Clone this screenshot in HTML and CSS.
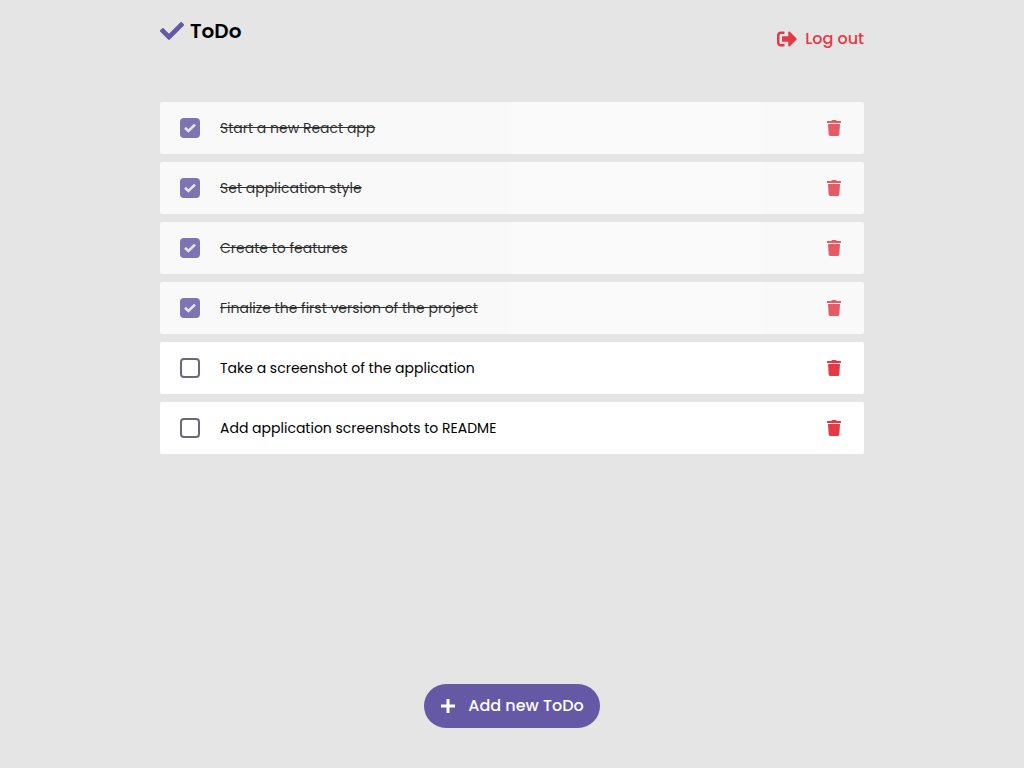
FILE: index.html
```html
<!DOCTYPE html>
<html lang="en">
<head>
  <meta charset="utf-8">
  <meta name="viewport" content="width=device-width, initial-scale=1">
  <title>ToDo</title>
  <link rel="stylesheet" href="styles.css">
</head>
<body>
  <svg class="sprite" aria-hidden="true">
    <symbol id="trash" viewBox="0 0 448 512"><path d="M432 32H312l-9.400-18.700A24 24 0 0 0 281.100 0H166.800a23.720 23.720 0 0 0-21.400 13.300L136 32H16A16 16 0 0 0 0 48v32a16 16 0 0 0 16 16h416a16 16 0 0 0 16-16V48a16 16 0 0 0-16-16zM53.200 467a48 48 0 0 0 47.900 45h245.800a48 48 0 0 0 47.900-45L416 128H32z"/></symbol>
  </svg>
  <div class="page">
    <header class="header">
      <h1 class="brand">
        <svg class="brand-icon" viewBox="0 0 512 512" aria-hidden="true"><path d="M173.898 439.404l-166.400-166.400c-9.997-9.997-9.997-26.206 0-36.204l36.203-36.204c9.997-9.998 26.207-9.998 36.204 0L192 312.690 432.095 72.596c9.997-9.997 26.207-9.997 36.204 0l36.203 36.204c9.997 9.997 9.997 26.206 0 36.204l-294.400 294.401c-9.998 9.997-26.207 9.997-36.204-.001z"/></svg>
        ToDo
      </h1>
      <button class="logout" type="button">
        <svg class="logout-icon" viewBox="0 0 512 512" aria-hidden="true"><path d="M497 273L329 441c-15 15-41 4.500-41-17v-96H152c-13.300 0-24-10.700-24-24v-96c0-13.300 10.700-24 24-24h136V88c0-21.400 25.900-32 41-17l168 168c9.300 9.400 9.300 24.600 0 34zM192 436v-40c0-6.600-5.400-12-12-12H96c-17.700 0-32-14.300-32-32V160c0-17.700 14.300-32 32-32h84c6.600 0 12-5.400 12-12V76c0-6.600-5.400-12-12-12H96c-53 0-96 43-96 96v192c0 53 43 96 96 96h84c6.600 0 12-5.400 12-12z"/></svg>
        Log out
      </button>
    </header>
    <main>
      <ul class="todos">
        <li class="todo done">
          <label class="todo-label"><input class="check" type="checkbox" checked><span class="todo-text">Start a new React app</span></label>
          <button class="delete" type="button" aria-label="Delete"><svg class="delete-icon"><use href="#trash"/></svg></button>
        </li>
        <li class="todo done">
          <label class="todo-label"><input class="check" type="checkbox" checked><span class="todo-text">Set application style</span></label>
          <button class="delete" type="button" aria-label="Delete"><svg class="delete-icon"><use href="#trash"/></svg></button>
        </li>
        <li class="todo done">
          <label class="todo-label"><input class="check" type="checkbox" checked><span class="todo-text">Create to features</span></label>
          <button class="delete" type="button" aria-label="Delete"><svg class="delete-icon"><use href="#trash"/></svg></button>
        </li>
        <li class="todo done">
          <label class="todo-label"><input class="check" type="checkbox" checked><span class="todo-text">Finalize the first version of the project</span></label>
          <button class="delete" type="button" aria-label="Delete"><svg class="delete-icon"><use href="#trash"/></svg></button>
        </li>
        <li class="todo">
          <label class="todo-label"><input class="check" type="checkbox"><span class="todo-text">Take a screenshot of the application</span></label>
          <button class="delete" type="button" aria-label="Delete"><svg class="delete-icon"><use href="#trash"/></svg></button>
        </li>
        <li class="todo">
          <label class="todo-label"><input class="check" type="checkbox"><span class="todo-text">Add application screenshots to README</span></label>
          <button class="delete" type="button" aria-label="Delete"><svg class="delete-icon"><use href="#trash"/></svg></button>
        </li>
      </ul>
    </main>
    <footer class="footer">
      <button class="add" type="button">
        <svg class="add-icon" viewBox="0 0 16 16" aria-hidden="true"><path d="M6.500 1h3v5.500H15v3H9.500V15h-3V9.500H1v-3h5.500z"/></svg>
        Add new ToDo
      </button>
    </footer>
  </div>
</body>
</html>
```
FILE: styles.css
```css
* { box-sizing: border-box; }

body {
  margin: 0;
  background: #e5e5e5;
  color: #000;
  font-family: Poppins, Inter, sans-serif;
  font-size: 14px;
}

button {
  border: 0;
  background: none;
  padding: 0;
  font: inherit;
  cursor: pointer;
}

svg { fill: currentColor; flex: none; }

.sprite { display: none; }

.page {
  display: flex;
  flex-direction: column;
  min-height: 100vh;
  max-width: 736px;
  margin: 0 auto;
  padding: 16px 16px 40px;
}

.header {
  display: flex;
  justify-content: space-between;
  align-items: flex-start;
  margin-bottom: 40px;
}

.brand {
  display: flex;
  align-items: center;
  gap: 6px;
  margin: 0;
  font-size: 20px;
  line-height: 30px;
  font-weight: 600;
}

.brand-icon { width: 24px; height: 24px; color: #6558a5; }

.logout {
  display: flex;
  align-items: center;
  gap: 8px;
  height: 46px;
  color: #e63946;
  font-size: 16px;
  line-height: 24px;
  font-weight: 500;
}

.logout-icon { width: 20px; height: 20px; }

.todos {
  display: flex;
  flex-direction: column;
  gap: 8px;
  margin: 0;
  padding: 0;
  list-style: none;
}

.todo {
  display: flex;
  align-items: center;
  padding: 16px 20px;
  border-radius: 2px;
  background: #fff;
}

.todo.done { opacity: 0.8; }

.todo-label {
  display: flex;
  align-items: center;
  flex: 1;
  gap: 20px;
  line-height: 20px;
}

.done .todo-text { text-decoration: line-through; }

.check {
  appearance: none;
  flex: none;
  width: 20px;
  height: 20px;
  margin: 0;
  border: 2px solid #6b667d;
  border-radius: 4px;
}

.check:checked {
  border-color: #6558a5;
  background: #6558a5 url("data:image/svg+xml,%3Csvg xmlns='http://www.w3.org/2000/svg' viewBox='0 0 12 10'%3E%3Cpath d='M1 4.800 4.400 8 11 1.600' fill='none' stroke='%23e5e5e5' stroke-width='2.600'/%3E%3C/svg%3E") center / 12px 10px no-repeat;
}

.delete {
  display: grid;
  place-items: center;
  width: 20px;
  height: 20px;
  color: #e63946;
}

.delete-icon { width: 14px; height: 16px; }

.footer {
  display: flex;
  justify-content: center;
  margin-top: auto;
}

.add {
  display: flex;
  align-items: center;
  gap: 12px;
  height: 44px;
  padding: 0 16px;
  border-radius: 22px;
  background: #6558a5;
  color: #fff;
  font-size: 16px;
  line-height: 24px;
  font-weight: 500;
}

.add-icon { width: 16px; height: 16px; }
```
